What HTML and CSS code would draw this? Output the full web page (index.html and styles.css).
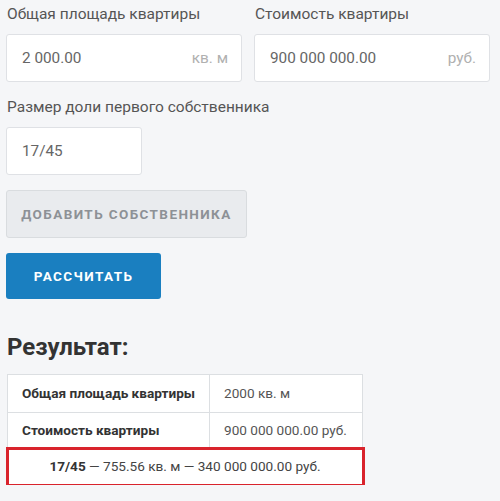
FILE: index.html
```html
<!DOCTYPE html>
<html lang="ru">
<head>
<meta charset="utf-8">
<link rel="stylesheet" href="styles.css">
</head>
<body>
<div class="page">
  <div class="grid">
    <div class="field">
      <div class="label">Общая площадь квартиры</div>
      <div class="input"><span class="val">2 000.00</span><span class="unit">кв. м</span></div>
    </div>
    <div class="field">
      <div class="label">Стоимость квартиры</div>
      <div class="input"><span class="val">900 000 000.00</span><span class="unit">руб.</span></div>
    </div>
  </div>
  <div class="field share">
    <div class="label">Размер доли первого собственника</div>
    <div class="input small"><span class="val">17/45</span></div>
  </div>
  <div class="btn btn-grey">ДОБАВИТЬ СОБСТВЕННИКА</div>
  <div class="btn btn-blue">РАССЧИТАТЬ</div>
  <h2 class="title">Результат:</h2>
  <table class="result">
    <tr class="r1"><th>Общая площадь квартиры</th><td>2000 кв. м</td></tr>
    <tr class="r2"><th>Стоимость квартиры</th><td>900 000 000.00 руб.</td></tr>
    <tr class="r3"><td colspan="2" class="total"><b>17/45</b> — 755.56 кв. м — 340 000 000.00 руб.</td></tr>
  </table>
</div>
</body>
</html>
```
FILE: styles.css
```css
html, body {
  margin: 0;
  padding: 0;
  background: #f5f6f8;
}
body {
  font-family: Roboto, "Liberation Sans", sans-serif;
  color: #444;
}
.page {
  padding: 2px 10px 0 6px;
}
.grid {
  display: grid;
  grid-template-columns: 236px 236px;
  column-gap: 12px;
}
.label {
  font-size: 15.5px;
  line-height: 24px;
  color: #555;
  padding-left: 1px;
  white-space: nowrap;
}
.input {
  margin-top: 8px;
  height: 48px;
  box-sizing: border-box;
  background: #fff;
  border: 1px solid #dfe1e5;
  border-radius: 3px;
  display: flex;
  align-items: center;
  justify-content: space-between;
  padding: 0 13px 0 15px;
  font-size: 15.3px;
}
.val {
  color: #666;
}
.unit {
  color: #b0b0b0;
}
.share {
  margin-top: 13px;
}
.input.small {
  width: 136px;
}
.btn {
  box-sizing: border-box;
  border-radius: 3px;
  font-weight: 700;
  font-size: 13.5px;
  letter-spacing: 1.4px;
  display: flex;
  align-items: center;
  justify-content: center;
}
.btn-grey {
  margin-top: 15px;
  width: 241px;
  height: 48px;
  background: #e9ebee;
  border: 1px solid #d9dcdf;
  color: #8d9196;
}
.btn-blue {
  margin-top: 15px;
  width: 155px;
  height: 46px;
  background: #1a7fc0;
  color: #fff;
}
.title {
  margin: 33px 0 0 1px;
  font-size: 24px;
  line-height: 30px;
  font-weight: 700;
  color: #333;
}
.result {
  margin: 12px 0 0 1px;
  border-collapse: collapse;
  table-layout: fixed;
  background: #fff;
  font-size: 13.6px;
  width: 356px;
}
.result th, .result td {
  border: 1px solid #dcdfe2;
  padding: 0 14px;
  text-align: left;
  line-height: 17px;
  white-space: nowrap;
}
.result th {
  width: 173px;
  font-weight: 700;
  color: #333;
}
.result td {
  color: #555;
}
.r1 th, .r1 td { height: 37px; }
.r2 th, .r2 td { height: 35px; }
.result td.total {
  height: 35px;
  text-align: center;
  color: #444;
  outline: 3px solid #d9232c;
  outline-offset: -1px;
}
.total b {
  color: #333;
}
```
